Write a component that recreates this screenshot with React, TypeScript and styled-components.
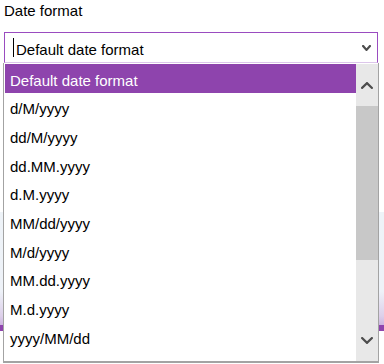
import React from "react";
import styled, { createGlobalStyle } from "styled-components";

const Global = createGlobalStyle`
  html, body { margin: 0; padding: 0; background: #ffffff; }
  body { font-family: "Liberation Sans", Arial, sans-serif; }
`;

const Page = styled.div`
  position: relative;
  width: 384px;
  height: 364px;
  overflow: hidden;
  background: #ffffff;
`;

const Label = styled.div`
  height: 22px;
  line-height: 22px;
  padding-left: 4px;
  font-size: 15px;
  color: #000000;
`;

const SelectBox = styled.div`
  box-sizing: border-box;
  margin: 10px 6px 0 4px;
  height: 31px;
  border: 1px solid #9a4cc0;
  border-bottom-color: #dcc6ea;
  display: flex;
  align-items: center;
  padding: 3px 6px 0 8px;
`;

const Caret = styled.span`
  display: inline-block;
  width: 1px;
  height: 19px;
  background: #000000;
  margin-right: 2px;
  align-self: flex-start;
  margin-top: 2px;
`;

const Value = styled.span`
  flex: 1;
  font-size: 15px;
  color: #000000;
`;

const Arrow = styled.span`
  display: flex;
  margin-top: -3px;
`;

const Backdrop = styled.div`
  box-sizing: border-box;
  margin-top: 149px;
  height: 119px;
  background: linear-gradient(to bottom, #eef3f8 0%, #eef2f8 70%, #ddd0ea 92%, #cdb5e0 100%);
  border-bottom: 6px solid #8e44ad;
`;

const Popup = styled.div`
  position: absolute;
  left: 3px;
  top: 63px;
  width: 376px;
  height: 300px;
  box-sizing: border-box;
  background: #ffffff;
  border: 1px solid #a3a3a3;
  border-top: none;
  border-bottom: 2px solid #a3a3a3;
  display: flex;
  padding: 1px 0 0 1px;
`;

const List = styled.div`
  flex: 1;
  display: flex;
  flex-direction: column;
  overflow: hidden;
`;

const Row = styled.div<{ $active?: boolean }>`
  flex: 0 0 28.67px;
  box-sizing: border-box;
  display: flex;
  align-items: center;
  padding: 4px 0 0 5px;
  font-size: 15px;
  color: ${(p) => (p.$active ? "#ffffff" : "#000000")};
  background: ${(p) => (p.$active ? "#8e44ad" : "transparent")};
  white-space: nowrap;
`;

const Scrollbar = styled.div`
  width: 22px;
  display: flex;
  flex-direction: column;
  background: #e8e8e8;
`;

const ScrollButton = styled.div`
  flex: 0 0 42px;
  display: flex;
  align-items: center;
  justify-content: center;
`;

const Thumb = styled.div`
  flex: 0 0 154px;
  background: #c8c8c8;
`;

const Spacer = styled.div`
  flex: 1;
`;

const Chevron = ({ up, w, h, sw }: { up?: boolean; w: number; h: number; sw: number }) => (
  <svg width={w} height={h} viewBox={`0 0 ${w} ${h}`} style={{ display: "block" }}>
    <polyline
      points={
        up
          ? `${sw / 2},${h - sw / 2} ${w / 2},${sw / 2} ${w - sw / 2},${h - sw / 2}`
          : `${sw / 2},${sw / 2} ${w / 2},${h - sw / 2} ${w - sw / 2},${sw / 2}`
      }
      fill="none"
      stroke="#4d4d4d"
      strokeWidth={sw}
      strokeLinecap="square"
      strokeLinejoin="miter"
    />
  </svg>
);

const items = [
  "Default date format",
  "d/M/yyyy",
  "dd/M/yyyy",
  "dd.MM.yyyy",
  "d.M.yyyy",
  "MM/dd/yyyy",
  "M/d/yyyy",
  "MM.dd.yyyy",
  "M.d.yyyy",
  "yyyy/MM/dd",
  "yyyy.MM.dd",
];

export default function App() {
  return (
    <Page>
      <Global />
      <Label>Date format</Label>
      <SelectBox>
        <Caret />
        <Value>Default date format</Value>
        <Arrow>
          <Chevron w={9} h={6} sw={2.2} />
        </Arrow>
      </SelectBox>
      <Backdrop />
      <Popup>
        <List>
          {items.map((t, i) => (
            <Row key={t} $active={i === 0}>
              {t}
            </Row>
          ))}
        </List>
        <Scrollbar>
          <ScrollButton>
            <Chevron up w={12} h={7} sw={2.2} />
          </ScrollButton>
          <Thumb />
          <Spacer />
          <ScrollButton>
            <Chevron w={12} h={7} sw={2.2} />
          </ScrollButton>
        </Scrollbar>
      </Popup>
    </Page>
  );
}
